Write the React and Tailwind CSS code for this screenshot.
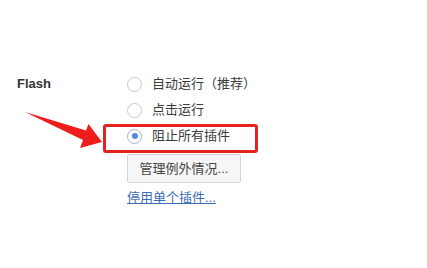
import React from 'react';

function Radio({ checked, label }) {
  return (
    <div className="flex h-[26px] items-center gap-[10px]">
      <span
        className={
          checked
            ? 'flex h-[15px] w-[15px] items-center justify-center rounded-full border border-[#9fb2cc] bg-white'
            : 'h-[15px] w-[15px] rounded-full border border-[#c9c9c9] bg-white'
        }
      >
        {checked && <span className="h-[6px] w-[6px] rounded-full bg-[#4a8ee6]" />}
      </span>
      <span className="text-[13px] text-[#3a3a3a]">{label}</span>
    </div>
  );
}

export default function App() {
  return (
    <div
      className="relative h-[268px] w-[427px] overflow-hidden bg-white pt-[71px]"
      style={{ fontFamily: '"Liberation Sans", "Noto Sans CJK SC", sans-serif' }}
    >
      <div className="flex">
        <div className="flex h-[26px] w-[127px] items-center pl-[17px] text-[13px] font-bold text-[#333]">
          Flash
        </div>
        <div className="flex flex-col">
          <Radio label="自动运行（推荐）" />
          <Radio label="点击运行" />
          <Radio checked label="阻止所有插件" />
          <button
            type="button"
            className="mt-[5px] flex h-[29px] w-[114px] items-center justify-center rounded-[2px] border border-[#d4d4d4] bg-[#f6f6f6] text-[13px] text-[#444]"
          >
            管理例外情况...
          </button>
          <a href="#" className="mt-[7px] text-[13px] leading-[16px] text-[#3b6cb8] underline">
            停用单个插件...
          </a>
        </div>
      </div>

      {/* annotation overlay */}
      <div className="absolute left-[103px] top-[124px] h-[29px] w-[155px] rounded-[3px] border-[3px] border-[#e8231f]" />
      <svg className="absolute left-0 top-0" width="427" height="268" viewBox="0 0 427 268">
        <polygon
          points="25,112 86,130.5 88.5,124 102,142 80,148 83,140"
          fill="#f01d1d"
        />
      </svg>
    </div>
  );
}
